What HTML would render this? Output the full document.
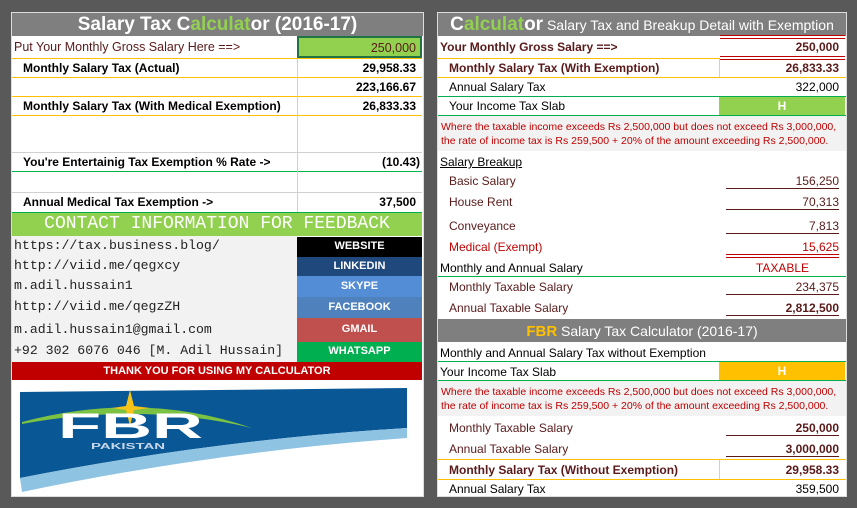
<!DOCTYPE html>
<html><head><meta charset="utf-8"><style>
*{margin:0;padding:0;box-sizing:border-box}
body{width:857px;height:508px;background:#595959;position:relative;overflow:hidden;font-family:"Liberation Sans",sans-serif;font-size:12px;color:#000}
.a{position:absolute;white-space:nowrap}
.p{position:absolute;background:#fff}
.t{position:absolute;background:#7f7f7f;color:#fff;text-align:center}
.l{position:absolute;height:1px}
.o{background:#ffc000}.g{background:#00b050}.gr{background:#d0d0d0}
.r{text-align:right}
.b{font-weight:bold}
.m{font-family:"Liberation Mono",monospace;font-size:13.2px;color:#222}
.btn{position:absolute;left:297px;width:125px;color:#fff;font-weight:bold;text-align:center;font-size:11px}
.br{color:#5a1a1a}
.red{color:#c00000}
.ul{position:absolute;height:1px;background:#5a1a1a}
.dr{position:absolute;height:4px;border-top:1px solid #c00000;border-bottom:1px solid #c00000}
.note{position:absolute;background:#f2f2f2;color:#c00000;font-size:10.5px;line-height:14px;padding:4px 3px}
</style></head><body>

<!-- LEFT -->
<div class="p" style="left:11px;top:12px;width:413px;height:485px;border:1px solid #ddd"></div>
<div class="t" style="left:12px;top:13px;width:411px;height:23px;font-size:19px;font-weight:bold;line-height:23px">Salary Tax C<span style="color:#92d050">alculat</span>or (2016-17)</div>
<div class="a" style="left:14px;top:40px;color:#5a1a1a;font-size:12.5px">Put Your Monthly Gross Salary Here ==&gt;</div>
<div class="a r" style="left:297px;top:36px;width:125px;height:22px;background:#92d050;border:2px solid #217346;padding:3px 4px 0 0;color:#5a1a1a;font-size:12.5px">250,000</div>
<div class="l o" style="left:12px;top:58px;width:410px"></div>
<div class="l o" style="left:12px;top:77px;width:410px"></div>
<div class="l o" style="left:12px;top:96px;width:410px"></div>
<div class="l o" style="left:12px;top:115px;width:410px"></div>
<div class="l gr" style="left:12px;top:152px;width:410px"></div>
<div class="l g" style="left:12px;top:171px;width:410px"></div>
<div class="l gr" style="left:12px;top:192px;width:410px"></div>
<div class="l g" style="left:12px;top:212px;width:410px"></div>
<div class="a" style="left:297px;top:58px;width:1px;height:154px;background:#d0d0d0"></div>
<div class="a b" style="left:23px;top:61px">Monthly Salary Tax (Actual)</div>
<div class="a b r" style="left:300px;top:61px;width:116px">29,958.33</div>
<div class="a b r" style="left:300px;top:80px;width:116px">223,166.67</div>
<div class="a b" style="left:23px;top:99px">Monthly Salary Tax (With Medical Exemption)</div>
<div class="a b r" style="left:300px;top:99px;width:116px">26,833.33</div>
<div class="a b" style="left:23px;top:155px">You're Entertainig Tax Exemption % Rate -&gt;</div>
<div class="a b r" style="left:300px;top:155px;width:120px">(10.43)</div>
<div class="a b" style="left:23px;top:195px">Annual Medical Tax Exemption -&gt;</div>
<div class="a b r" style="left:300px;top:195px;width:116px">37,500</div>
<div class="a" style="left:12px;top:213px;width:410px;height:23px;background:#92d050;color:#fff;text-align:center;font-family:'Liberation Mono',monospace;font-size:18px;line-height:23px">CONTACT INFORMATION FOR FEEDBACK</div>
<div class="a" style="left:12px;top:236px;width:285px;height:126px;background:#f2f2f2"></div>
<div class="a m" style="left:14px;top:238px">https://tax.business.blog/</div>
<div class="a m" style="left:14px;top:258px">http://viid.me/qegxcy</div>
<div class="a m" style="left:14px;top:278px">m.adil.hussain1</div>
<div class="a m" style="left:14px;top:299px">http://viid.me/qegzZH</div>
<div class="a m" style="left:14px;top:322px">m.adil.hussain1@gmail.com</div>
<div class="a m" style="left:14px;top:343px">+92 302 6076 046 [M. Adil Hussain]</div>
<div class="btn" style="top:237px;height:20px;line-height:18px;background:#000">WEBSITE</div>
<div class="btn" style="top:257px;height:19px;line-height:18px;background:#1f497d">LINKEDIN</div>
<div class="btn" style="top:276px;height:21px;line-height:20px;background:#538dd5">SKYPE</div>
<div class="btn" style="top:297px;height:21px;line-height:20px;background:#4f81bd">FACEBOOK</div>
<div class="btn" style="top:318px;height:24px;line-height:23px;background:#c0504d">GMAIL</div>
<div class="btn" style="top:342px;height:20px;line-height:18px;background:#00b050">WHATSAPP</div>
<div class="a b" style="left:12px;top:362px;width:410px;height:18px;background:#c00000;color:#fff;text-align:center;line-height:18px;font-size:11px">THANK YOU FOR USING MY CALCULATOR</div>
<svg class="a" style="left:12px;top:380px" width="410" height="116" viewBox="0 0 410 116">
<path d="M8 12 L395 8 L395 48 Q200 60 8 98 Z" fill="#0a5796"/>
<path d="M8 98 Q200 60 395 48 L395 58 Q200 72 10 112 Z" fill="#8ec3e2"/>
<path d="M10 42 Q130 10 240 48 Q130 22 10 44 Z" fill="#7cc242"/>
<path d="M118 10 L122 26 L138 28 L122 30 L118 46 L114 30 L100 28 L114 26 Z" fill="#f6c419"/>
<text x="46" y="58" fill="#fff" font-family="Liberation Sans" font-weight="bold" font-size="35" textLength="145" lengthAdjust="spacingAndGlyphs">FBR</text>
<text x="79" y="69" fill="#c8d8ea" font-family="Liberation Sans" font-weight="bold" font-size="8" textLength="74" lengthAdjust="spacingAndGlyphs">PAKISTAN</text>
</svg>

<!-- RIGHT -->
<div class="p" style="left:437px;top:12px;width:410px;height:485px;border:1px solid #ddd"></div>
<div class="t" style="left:438px;top:13px;width:408px;height:23px;line-height:24px;font-size:14px"><span style="font-size:19px;font-weight:bold">C<span style="color:#92d050">alculat</span>or</span> Salary Tax and Breakup Detail with Exemption</div>
<div class="a b br" style="left:440px;top:40px">Your Monthly Gross Salary ==&gt;</div>
<div class="dr" style="left:720px;top:35px;width:125px"></div>
<div class="a b r br" style="left:720px;top:40px;width:119px">250,000</div>
<div class="dr" style="left:720px;top:56px;width:125px"></div>
<div class="l o" style="left:438px;top:58px;width:282px"></div>
<div class="a b br" style="left:449px;top:61px">Monthly Salary Tax (With Exemption)</div>
<div class="a" style="left:719px;top:59px;width:1px;height:18px;background:#d0d0d0"></div>
<div class="a b r br" style="left:720px;top:61px;width:119px">26,833.33</div>
<div class="l o" style="left:438px;top:77px;width:408px"></div>
<div class="a" style="left:449px;top:80px">Annual Salary Tax</div>
<div class="a r" style="left:720px;top:80px;width:119px">322,000</div>
<div class="l g" style="left:438px;top:96px;width:408px"></div>
<div class="a" style="left:449px;top:99px">Your Income Tax Slab</div>
<div class="a b" style="left:719px;top:97px;width:126px;height:18px;background:#92d050;color:#fff;text-align:center;line-height:18px">H</div>
<div class="l g" style="left:438px;top:115px;width:408px"></div>
<div class="note" style="left:438px;top:116px;width:408px;height:35px">Where the taxable income exceeds Rs 2,500,000 but does not exceed Rs 3,000,000,<br>the rate of income tax is Rs 259,500 + 20% of the amount exceeding Rs 2,500,000.</div>
<div class="a" style="left:440px;top:155px;text-decoration:underline">Salary Breakup</div>
<div class="a br" style="left:449px;top:174px">Basic Salary</div>
<div class="a r br" style="left:720px;top:174px;width:119px">156,250</div>
<div class="ul" style="left:726px;top:188px;width:113px"></div>
<div class="a br" style="left:449px;top:195px">House Rent</div>
<div class="a r br" style="left:720px;top:195px;width:119px">70,313</div>
<div class="ul" style="left:726px;top:209px;width:113px"></div>
<div class="a br" style="left:449px;top:219px">Conveyance</div>
<div class="a r br" style="left:720px;top:219px;width:119px">7,813</div>
<div class="ul" style="left:726px;top:233px;width:113px"></div>
<div class="a red" style="left:449px;top:240px">Medical (Exempt)</div>
<div class="a r red" style="left:720px;top:240px;width:119px">15,625</div>
<div class="dr" style="left:726px;top:254px;width:113px"></div>
<div class="a" style="left:440px;top:261px">Monthly and Annual Salary</div>
<div class="a red" style="left:720px;top:261px;width:125px;text-align:center">TAXABLE</div>
<div class="l g" style="left:438px;top:276px;width:408px"></div>
<div class="a br" style="left:449px;top:280px">Monthly Taxable Salary</div>
<div class="a r br" style="left:720px;top:280px;width:119px">234,375</div>
<div class="ul" style="left:726px;top:294px;width:113px"></div>
<div class="a br" style="left:449px;top:301px">Annual Taxable Salary</div>
<div class="a b r br" style="left:720px;top:301px;width:119px">2,812,500</div>
<div class="ul" style="left:726px;top:315px;width:113px"></div>
<div class="t" style="left:438px;top:319px;width:408px;height:23px;line-height:24px;font-size:14px"><span style="color:#ffc000;font-weight:bold;font-size:15px">FBR</span> Salary Tax Calculator (2016-17)</div>
<div class="a" style="left:440px;top:346px">Monthly and Annual Salary Tax without Exemption</div>
<div class="l g" style="left:438px;top:361px;width:408px"></div>
<div class="a" style="left:440px;top:365px">Your Income Tax Slab</div>
<div class="a b" style="left:719px;top:362px;width:126px;height:18px;background:#ffc000;color:#fff;text-align:center;line-height:18px">H</div>
<div class="l g" style="left:438px;top:380px;width:408px"></div>
<div class="note" style="left:438px;top:381px;width:408px;height:35px">Where the taxable income exceeds Rs 2,500,000 but does not exceed Rs 3,000,000,<br>the rate of income tax is Rs 259,500 + 20% of the amount exceeding Rs 2,500,000.</div>
<div class="a br" style="left:449px;top:421px">Monthly Taxable Salary</div>
<div class="a b r br" style="left:720px;top:421px;width:119px">250,000</div>
<div class="ul" style="left:726px;top:435px;width:113px"></div>
<div class="a br" style="left:449px;top:442px">Annual Taxable Salary</div>
<div class="a b r br" style="left:720px;top:442px;width:119px">3,000,000</div>
<div class="ul" style="left:726px;top:456px;width:113px"></div>
<div class="l o" style="left:438px;top:459px;width:408px"></div>
<div class="a b br" style="left:449px;top:463px">Monthly Salary Tax (Without Exemption)</div>
<div class="a" style="left:719px;top:460px;width:1px;height:19px;background:#d0d0d0"></div>
<div class="a b r br" style="left:720px;top:463px;width:119px">29,958.33</div>
<div class="l o" style="left:438px;top:479px;width:408px"></div>
<div class="a" style="left:449px;top:482px">Annual Salary Tax</div>
<div class="a r" style="left:720px;top:482px;width:119px">359,500</div>
</body></html>
